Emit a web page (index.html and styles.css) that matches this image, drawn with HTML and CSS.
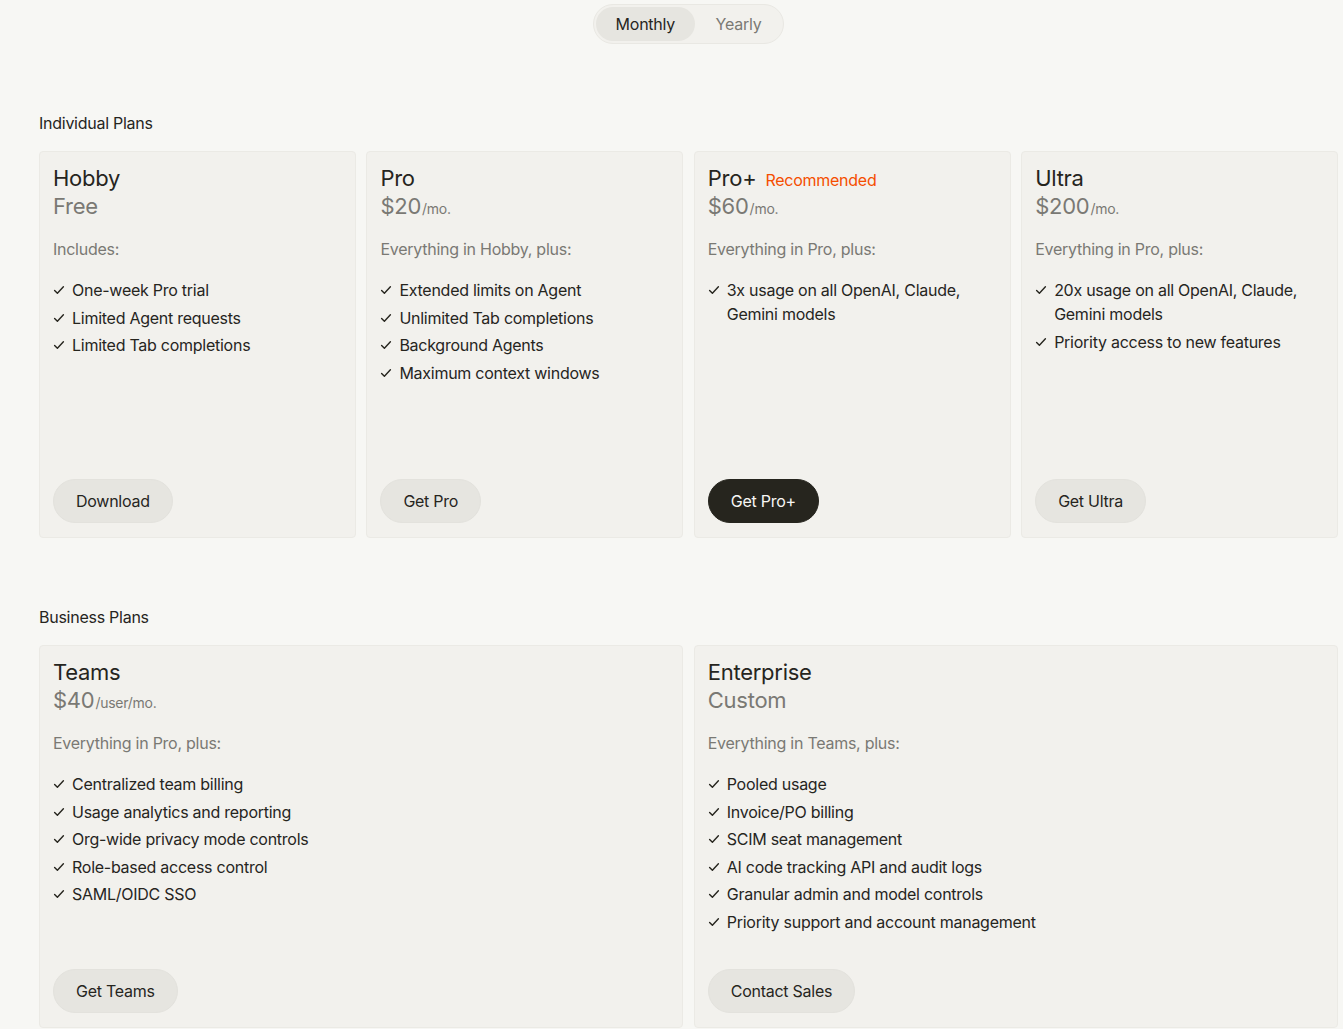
FILE: index.html
```html
<!DOCTYPE html>
<html lang="en">
<head>
<meta charset="utf-8">
<title>Pricing</title>
<link rel="stylesheet" href="styles.css">
</head>
<body>
<main class="page">
  <div class="toggle-wrap">
    <div class="toggle">
      <button class="toggle-btn active">Monthly</button>
      <button class="toggle-btn">Yearly</button>
    </div>
  </div>

  <section class="section">
    <h2 class="section-title">Individual Plans</h2>
    <div class="grid grid-4">
      <div class="card card-ind">
        <div class="title-row"><span class="plan-name">Hobby</span></div>
        <div class="price">Free</div>
        <p class="desc">Includes:</p>
        <ul class="features">
          <li><svg class="check" viewBox="0 0 12 12"><path d="M1.6 6.4 L4.4 9.2 L10.4 2.8"/></svg><span>One-week Pro trial</span></li>
          <li><svg class="check" viewBox="0 0 12 12"><path d="M1.6 6.4 L4.4 9.2 L10.4 2.8"/></svg><span>Limited Agent requests</span></li>
          <li><svg class="check" viewBox="0 0 12 12"><path d="M1.6 6.4 L4.4 9.2 L10.4 2.8"/></svg><span>Limited Tab completions</span></li>
        </ul>
        <div class="actions"><button class="btn">Download</button></div>
      </div>
      <div class="card card-ind">
        <div class="title-row"><span class="plan-name">Pro</span></div>
        <div class="price">$20<span class="per">/mo.</span></div>
        <p class="desc">Everything in Hobby, plus:</p>
        <ul class="features">
          <li><svg class="check" viewBox="0 0 12 12"><path d="M1.6 6.4 L4.4 9.2 L10.4 2.8"/></svg><span>Extended limits on Agent</span></li>
          <li><svg class="check" viewBox="0 0 12 12"><path d="M1.6 6.4 L4.4 9.2 L10.4 2.8"/></svg><span>Unlimited Tab completions</span></li>
          <li><svg class="check" viewBox="0 0 12 12"><path d="M1.6 6.4 L4.4 9.2 L10.4 2.8"/></svg><span>Background Agents</span></li>
          <li><svg class="check" viewBox="0 0 12 12"><path d="M1.6 6.4 L4.4 9.2 L10.4 2.8"/></svg><span>Maximum context windows</span></li>
        </ul>
        <div class="actions"><button class="btn">Get Pro</button></div>
      </div>
      <div class="card card-ind">
        <div class="title-row"><span class="plan-name">Pro+</span><span class="badge">Recommended</span></div>
        <div class="price">$60<span class="per">/mo.</span></div>
        <p class="desc">Everything in Pro, plus:</p>
        <ul class="features">
          <li><svg class="check" viewBox="0 0 12 12"><path d="M1.6 6.4 L4.4 9.2 L10.4 2.8"/></svg><span>3x usage on all OpenAI, Claude, Gemini models</span></li>
        </ul>
        <div class="actions"><button class="btn btn-dark">Get Pro+</button></div>
      </div>
      <div class="card card-ind">
        <div class="title-row"><span class="plan-name">Ultra</span></div>
        <div class="price">$200<span class="per">/mo.</span></div>
        <p class="desc">Everything in Pro, plus:</p>
        <ul class="features">
          <li><svg class="check" viewBox="0 0 12 12"><path d="M1.6 6.4 L4.4 9.2 L10.4 2.8"/></svg><span>20x usage on all OpenAI, Claude, Gemini models</span></li>
          <li><svg class="check" viewBox="0 0 12 12"><path d="M1.6 6.4 L4.4 9.2 L10.4 2.8"/></svg><span>Priority access to new features</span></li>
        </ul>
        <div class="actions"><button class="btn">Get Ultra</button></div>
      </div>
    </div>
  </section>

  <section class="section">
    <h2 class="section-title">Business Plans</h2>
    <div class="grid grid-2">
      <div class="card card-biz">
        <div class="title-row"><span class="plan-name">Teams</span></div>
        <div class="price">$40<span class="per">/user/mo.</span></div>
        <p class="desc">Everything in Pro, plus:</p>
        <ul class="features">
          <li><svg class="check" viewBox="0 0 12 12"><path d="M1.6 6.4 L4.4 9.2 L10.4 2.8"/></svg><span>Centralized team billing</span></li>
          <li><svg class="check" viewBox="0 0 12 12"><path d="M1.6 6.4 L4.4 9.2 L10.4 2.8"/></svg><span>Usage analytics and reporting</span></li>
          <li><svg class="check" viewBox="0 0 12 12"><path d="M1.6 6.4 L4.4 9.2 L10.4 2.8"/></svg><span>Org-wide privacy mode controls</span></li>
          <li><svg class="check" viewBox="0 0 12 12"><path d="M1.6 6.4 L4.4 9.2 L10.4 2.8"/></svg><span>Role-based access control</span></li>
          <li><svg class="check" viewBox="0 0 12 12"><path d="M1.6 6.4 L4.4 9.2 L10.4 2.8"/></svg><span>SAML/OIDC SSO</span></li>
        </ul>
        <div class="actions"><button class="btn">Get Teams</button></div>
      </div>
      <div class="card card-biz">
        <div class="title-row"><span class="plan-name">Enterprise</span></div>
        <div class="price">Custom</div>
        <p class="desc">Everything in Teams, plus:</p>
        <ul class="features">
          <li><svg class="check" viewBox="0 0 12 12"><path d="M1.6 6.4 L4.4 9.2 L10.4 2.8"/></svg><span>Pooled usage</span></li>
          <li><svg class="check" viewBox="0 0 12 12"><path d="M1.6 6.4 L4.4 9.2 L10.4 2.8"/></svg><span>Invoice/PO billing</span></li>
          <li><svg class="check" viewBox="0 0 12 12"><path d="M1.6 6.4 L4.4 9.2 L10.4 2.8"/></svg><span>SCIM seat management</span></li>
          <li><svg class="check" viewBox="0 0 12 12"><path d="M1.6 6.4 L4.4 9.2 L10.4 2.8"/></svg><span>AI code tracking API and audit logs</span></li>
          <li><svg class="check" viewBox="0 0 12 12"><path d="M1.6 6.4 L4.4 9.2 L10.4 2.8"/></svg><span>Granular admin and model controls</span></li>
          <li><svg class="check" viewBox="0 0 12 12"><path d="M1.6 6.4 L4.4 9.2 L10.4 2.8"/></svg><span>Priority support and account management</span></li>
        </ul>
        <div class="actions"><button class="btn">Contact Sales</button></div>
      </div>
    </div>
  </section>
</main>
</body>
</html>
```

FILE: styles.css
```css
* { box-sizing: border-box; }

html, body {
  margin: 0;
  padding: 0;
  background: #f7f7f4;
}

body {
  font-family: Inter, "Noto Sans", "Liberation Sans", sans-serif;
  color: #26251e;
  font-size: 16px;
  line-height: 24px;
  letter-spacing: -0.26px;
  -webkit-font-smoothing: antialiased;
}

.page {
  width: 1299px;
  margin-left: 39px;
  padding-top: 4px;
}

.toggle-wrap {
  display: flex;
  justify-content: center;
}

.toggle {
  display: flex;
  padding: 2px;
  height: 40px;
  background: #f2f1ed;
  border: 1px solid #e9e8e3;
  border-radius: 999px;
}

.toggle-btn {
  font: inherit;
  font-size: 16px;
  letter-spacing: -0.26px;
  border: 0;
  background: transparent;
  color: #7a7974;
  padding: 0 20px 0 21px;
  border-radius: 999px;
  height: 34px;
  cursor: pointer;
}

.toggle-btn.active {
  background: #e6e5e0;
  color: #26251e;
  padding: 0 20px;
  width: 99px;
}

.section-title {
  margin: 67px 0 16px;
  font-size: 16px;
  line-height: 24px;
  font-weight: 400;
  color: #26251e;
}

.grid {
  display: grid;
  gap: 10.5px;
}

.grid-4 { grid-template-columns: repeat(4, 1fr); }
.grid-2 { grid-template-columns: repeat(2, 1fr); }

.card {
  display: flex;
  flex-direction: column;
  background: #f2f1ed;
  border: 1px solid #ebeae5;
  border-radius: 4px;
  padding: 12px 13px 14px;
}

.card-ind { height: 387px; }
.card-biz { height: 383px; }

.title-row {
  display: flex;
  align-items: baseline;
  gap: 9px;
  height: 28px;
  line-height: 28px;
}

.plan-name {
  font-size: 22px;
  line-height: 28px;
  color: #26251e;
}

.badge {
  font-size: 16px;
  line-height: 20px;
  color: #f54e00;
}

.price {
  font-size: 22px;
  line-height: 28px;
  height: 28px;
  color: #7a7974;
}

.per {
  font-size: 14px;
  line-height: 1;
  margin-left: 1px;
}

.desc {
  margin: 17px 0 0;
  color: #7a7974;
  font-size: 16px;
  line-height: 24px;
}

.features {
  list-style: none;
  margin: 17px 0 0;
  padding: 0;
  display: flex;
  flex-direction: column;
  gap: 3.6px;
}

.features li {
  display: flex;
  gap: 7px;
  line-height: 24px;
  color: #26251e;
}

.check {
  flex: none;
  width: 12px;
  height: 12px;
  margin-top: 6px;
  fill: none;
  stroke: #26251e;
  stroke-width: 1.4;
  stroke-linecap: round;
  stroke-linejoin: round;
}

.actions {
  margin-top: auto;
}

.btn {
  font: inherit;
  font-size: 16px;
  letter-spacing: -0.26px;
  height: 44px;
  padding: 0 22px;
  border-radius: 999px;
  border: 1px solid #e3e2dd;
  background: #e6e5e0;
  color: #26251e;
  cursor: pointer;
}

.btn-dark {
  background: #26251e;
  border-color: #26251e;
  color: #f7f7f4;
}
```
